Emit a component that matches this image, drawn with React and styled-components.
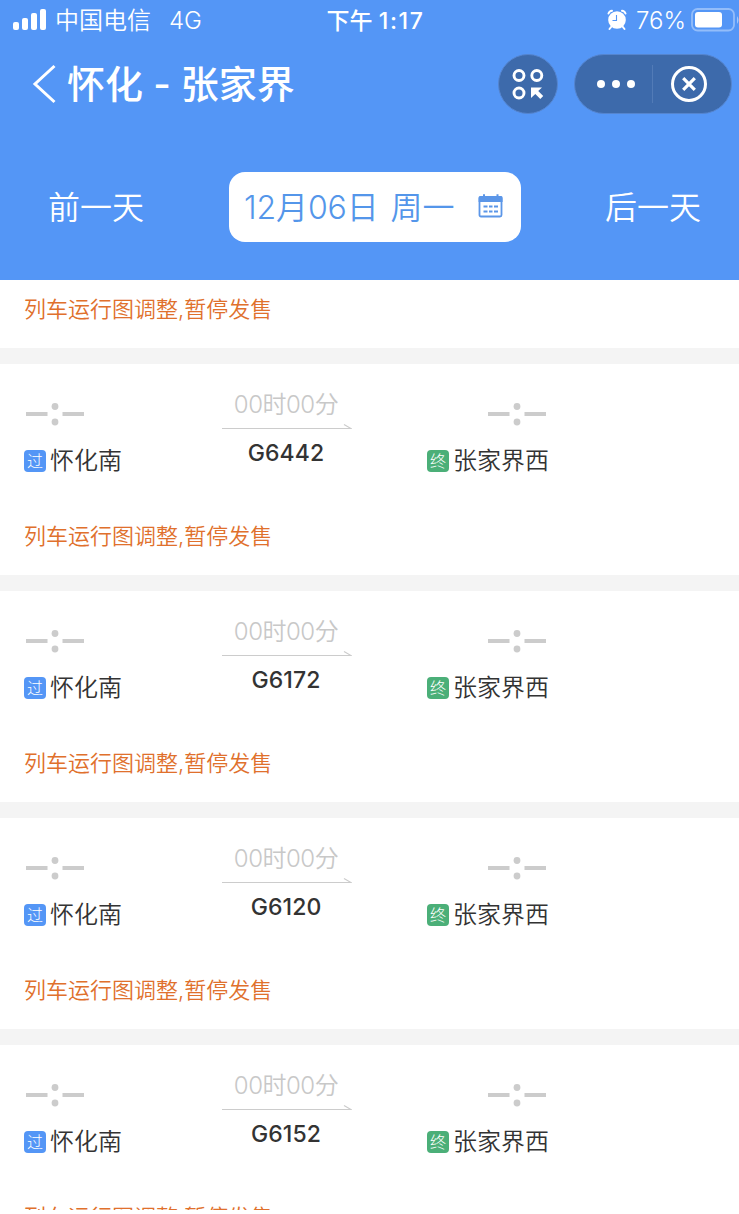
/* eslint-disable react/prop-types */
import styled, { createGlobalStyle } from "styled-components";

const GlobalStyle = createGlobalStyle`
  * {
    box-sizing: border-box;
  }
  body {
    margin: 0;
    background: #fff;
    color: #333;
    font-family: Inter, "Noto Sans CJK SC", sans-serif;
  }
`;

const Page = styled.div`
  width: 739px;
  height: 1210px;
  overflow: hidden;
  background: #fff;
`;

const Header = styled.header`
  height: 280px;
  background: #5496f6;
  color: #fff;
`;

const StatusBar = styled.div`
  display: grid;
  grid-template-columns: 1fr 98px 1fr;
  height: 40px;
  line-height: 42px;
  font-size: 24px;
  white-space: nowrap;
`;

const StatusGroup = styled.div`
  display: flex;
  align-items: center;
  justify-content: ${({ $end }) => ($end ? "flex-end" : "flex-start")};
  padding-left: ${({ $end }) => ($end ? "0" : "13px")};
  font-weight: 300;

  & svg {
    flex: none;
    margin-bottom: 2px;
  }
`;

const Carrier = styled.span`
  margin-left: 8px;
  font-weight: 350;
`;

const Network = styled.span`
  margin-left: 18px;
`;

const Clock = styled.div`
  margin-left: 6px;
  font-size: 23px;
  font-weight: 500;
`;

const ClockDigits = styled.span`
  letter-spacing: 1.7px;
`;

const Battery = styled.span`
  margin: 0 5px 0 9px;
`;

const NavBar = styled.div`
  display: flex;
  align-items: center;
  height: 88px;
  padding: 0 7px 0 32px;
`;

const Title = styled.h1`
  flex: 1;
  margin: 0 0 0 10px;
  font-size: 38px;
  font-weight: 500;
  line-height: 56px;
  white-space: nowrap;
`;

const RoundButton = styled.button`
  display: flex;
  width: 60px;
  height: 60px;
  padding: 0;
  border: 1px solid #5585cf;
  border-radius: 50%;
  background: #3d6aab;
  align-items: center;
  justify-content: center;
`;

const Capsule = styled.div`
  display: flex;
  align-items: center;
  width: 158px;
  height: 60px;
  margin-left: 16px;
  border: 1px solid #5585cf;
  border-radius: 30px;
  background: #3d6aab;
`;

const CapsuleButton = styled.button`
  display: flex;
  flex: 1;
  height: 38px;
  padding: ${({ $pad }) => $pad};
  border: 0;
  border-left: ${({ $divided }) => ($divided ? "1px solid #527bb7" : "0")};
  background: none;
  align-items: center;
  justify-content: center;
`;

const DateBar = styled.div`
  display: grid;
  grid-template-columns: 229px 292px 1fr;
  align-items: center;
  height: 70px;
  margin-top: 44px;
`;

const DayLink = styled.span`
  padding: 2px 0 0 ${({ $left }) => $left};
  font-size: 32px;
  font-weight: 350;
  line-height: 48px;
`;

const DateBox = styled.div`
  display: flex;
  align-items: center;
  justify-content: space-between;
  height: 70px;
  padding: 0 17px 0 15px;
  border-radius: 16px;
  background: #fff;
  color: #5496ea;
  font-size: 32px;
  font-weight: 350;
  line-height: 70px;
  white-space: nowrap;
  word-spacing: 3px;
`;

const DateText = styled.span`
  padding-top: 2px;
  letter-spacing: -0.1px;
`;

const Notice = styled.p`
  margin: 0;
  color: #e0702c;
  font-size: 22px;
  font-weight: 350;
  line-height: 34px;
  white-space: nowrap;
`;

const Card = styled.section`
  height: ${({ $height }) => $height};
  padding: ${({ $top }) => $top} 24px 0;
  border-bottom: 16px solid #f4f4f4;
`;

const Trip = styled.div`
  display: grid;
  grid-template-columns: 198px 130px 197px;
  height: 155px;
`;

const Stop = styled.div`
  display: flex;
  flex-direction: column;
  align-items: ${({ $end }) => ($end ? "flex-end" : "flex-start")};
  padding-top: 25px;

  & > svg {
    margin: 0 ${({ $end }) => ($end ? "3px" : "0")} 0 2px;
  }
`;

const Station = styled.div`
  display: flex;
  align-items: center;
  gap: 4px;
  height: 34px;
  margin-top: 5px;
  font-size: 24px;
  font-weight: 350;
  line-height: 36px;
  white-space: nowrap;
`;

const Tag = styled.span`
  width: 22px;
  height: 22px;
  border-radius: 4px;
  background: ${({ $color }) => $color};
  color: #fff;
  font-size: 16px;
  font-weight: 300;
  line-height: 23px;
  text-align: center;
`;

const Middle = styled.div`
  display: flex;
  flex-direction: column;
  align-items: center;
  padding-top: 23px;
  white-space: nowrap;
`;

const Duration = styled.span`
  height: 34px;
  margin-right: 2px;
  color: #c8c8c8;
  font-size: 24px;
  font-weight: 350;
  line-height: 35px;
  letter-spacing: -0.5px;
`;

const TrainNo = styled.span`
  margin: 6px 2px 0 0;
  font-size: 23px;
  font-weight: 500;
  line-height: 34px;
  letter-spacing: 0.1px;
`;

const trains = ["G6442", "G6172", "G6120", "G6152"];

const Signal = () => (
  <svg width="34" height="22" fill="#fff">
    <rect x="0" y="13" width="6" height="8" rx="2" />
    <rect x="9" y="9" width="6" height="12" rx="2" />
    <rect x="18" y="4" width="6" height="17" rx="2" />
    <rect x="27" y="0" width="6" height="21" rx="2" />
  </svg>
);

const AlarmIcon = () => (
  <svg width="20" height="22" viewBox="0 0 20 22">
    <circle cx="10" cy="11" r="8.8" fill="#fff" />
    <path
      d="M1.5 4.5Q2.5 2 5 1.8M18.5 4.5Q17.5 2 15 1.8M4.5 17.5L2.5 20M15.5 17.5L17.5 20"
      fill="none"
      stroke="#fff"
      strokeWidth="2"
      strokeLinecap="round"
    />
    <path d="M9.5 6v5.5H5.5" fill="none" stroke="#5496f6" strokeWidth="1.1" />
  </svg>
);

const BatteryIcon = () => (
  <svg width="48" height="24" viewBox="0 0 48 24">
    <rect
      x="1"
      y="1"
      width="42"
      height="21.5"
      rx="5.5"
      fill="none"
      stroke="#93bdfa"
      strokeWidth="1.8"
    />
    <rect x="4" y="4" width="27" height="15.5" rx="3" fill="#fff" />
    <path d="M46 8q3 4 0 8z" fill="#a2c7fb" />
  </svg>
);

const BackIcon = () => (
  <svg width="25" height="40" viewBox="0 0 25 40">
    <path d="M22.5 2L3 20l19.5 18" fill="none" stroke="#fff" strokeWidth="3" />
  </svg>
);

const ScanIcon = () => (
  <svg width="32" height="32" viewBox="0 0 32 32" fill="none" stroke="#fff">
    <g strokeWidth="2.9">
      <circle cx="7" cy="7.5" r="5" />
      <circle cx="24.8" cy="7.5" r="5" />
      <circle cx="7" cy="25" r="5" />
    </g>
    <path
      d="M19 19.5h11l-3.8 3.5 5 5-2.9 2.9-5-5-4.3 4.1z"
      fill="#fff"
      stroke="none"
    />
  </svg>
);

const MoreIcon = () => (
  <svg width="40" height="10" fill="#fff">
    <circle cx="5" cy="5" r="4" />
    <circle cx="20" cy="5" r="4" />
    <circle cx="35" cy="5" r="4" />
  </svg>
);

const CloseIcon = () => (
  <svg width="38" height="38" fill="none" stroke="#fff" strokeWidth="3">
    <circle cx="19" cy="19" r="16.5" />
    <path d="M13.2 13.2l11.6 11.6M24.8 13.2L13.2 24.8" strokeWidth="3.2" />
  </svg>
);

const CalendarIcon = () => (
  <svg width="26" height="26" viewBox="0 0 26 26">
    <rect
      x="1.5"
      y="3"
      width="22"
      height="19.5"
      rx="1.5"
      fill="none"
      stroke="#5b96e8"
      strokeWidth="1.8"
    />
    <path
      d="M.6 3.5q0-1.500 1.500-1.500h21q1.500 0 1.500 1.500V8H.6zM5 .3h2v3H5zM18.500.3h2v3h-2z"
      fill="#5b96e8"
    />
    <path
      d="M5.500 12.500h4M11 12.500h3.500M16 12.500h4M5.500 17.500h4M11 17.500h3.500M16 17.500h4"
      stroke="#5b96e8"
      strokeWidth="1.8"
    />
  </svg>
);

const EmptyTime = () => (
  <svg width="58" height="50" viewBox="0 0 58 50" fill="#ccc">
    <rect x="0" y="23" width="21.5" height="4" />
    <rect x="36.5" y="23" width="21.5" height="4" />
    <circle cx="29" cy="17.5" r="3.4" />
    <circle cx="29" cy="33" r="3.4" />
  </svg>
);

const Arrow = () => (
  <svg width="130" height="9" viewBox="0 0 130 9">
    <path d="M0 7.5h129l-7-4" fill="none" stroke="#ccc" strokeWidth="1.2" />
  </svg>
);

const TrainCard = ({ number }) => (
  <Card $height="227px" $top="0">
    <Trip>
      <Stop>
        <EmptyTime />
        <Station>
          <Tag $color="#5496f6">过</Tag>怀化南
        </Station>
      </Stop>
      <Middle>
        <Duration>00时00分</Duration>
        <Arrow />
        <TrainNo>{number}</TrainNo>
      </Middle>
      <Stop $end>
        <EmptyTime />
        <Station>
          <Tag $color="#4baf78">终</Tag>张家界西
        </Station>
      </Stop>
    </Trip>
    <Notice>列车运行图调整,暂停发售</Notice>
  </Card>
);

export default function App() {
  return (
    <>
      <GlobalStyle />
      <Page>
        <Header>
          <StatusBar>
            <StatusGroup>
              <Signal />
              <Carrier>中国电信</Carrier>
              <Network>4G</Network>
            </StatusGroup>
            <Clock>
              下午 <ClockDigits>1:17</ClockDigits>
            </Clock>
            <StatusGroup $end>
              <AlarmIcon />
              <Battery>76%</Battery>
              <BatteryIcon />
            </StatusGroup>
          </StatusBar>
          <NavBar>
            <BackIcon />
            <Title>怀化 - 张家界</Title>
            <RoundButton>
              <ScanIcon />
            </RoundButton>
            <Capsule>
              <CapsuleButton $pad="0 0 0 5px">
                <MoreIcon />
              </CapsuleButton>
              <CapsuleButton $divided $pad="0 6px 0 0">
                <CloseIcon />
              </CapsuleButton>
            </Capsule>
          </NavBar>
          <DateBar>
            <DayLink $left="48px">前一天</DayLink>
            <DateBox>
              <DateText>12月06日 周一</DateText>
              <CalendarIcon />
            </DateBox>
            <DayLink $left="84px">后一天</DayLink>
          </DateBar>
        </Header>
        <Card $height="84px" $top="12px">
          <Notice>列车运行图调整,暂停发售</Notice>
        </Card>
        {trains.map((number) => (
          <TrainCard key={number} number={number} />
        ))}
      </Page>
    </>
  );
}
